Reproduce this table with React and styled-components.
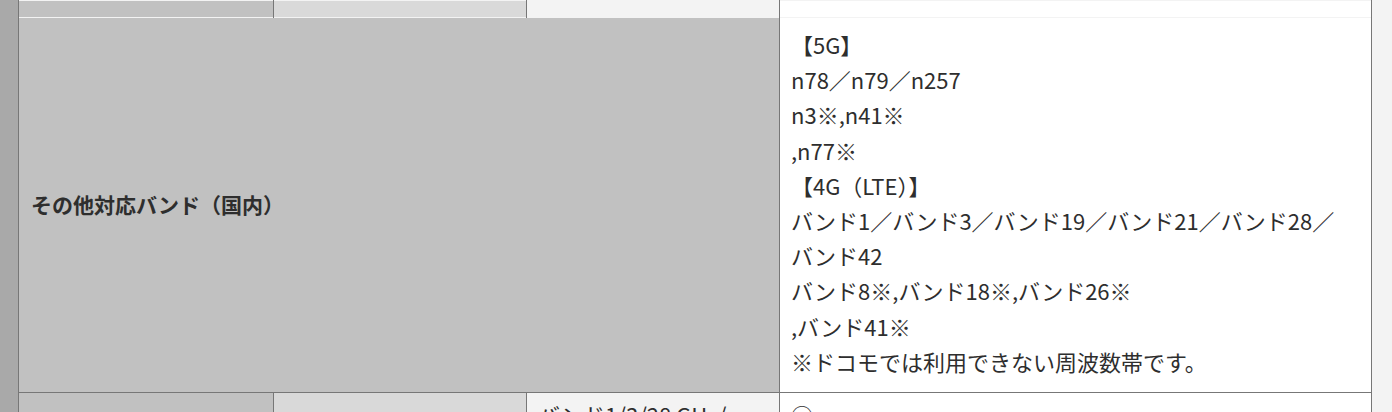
import styled, { createGlobalStyle } from "styled-components";

const GlobalStyle = createGlobalStyle`
  html, body {
    margin: 0;
    padding: 0;
    overflow: hidden;
    background: #f3f3f3;
  }
  body {
    font-family: "Noto Sans CJK JP", "Noto Sans", sans-serif;
    color: #333;
  }
`;

const Page = styled.div`
  display: flex;
  align-items: flex-start;
  width: 1392px;
`;

const Gutter = styled.div`
  width: 18px;
  flex: none;
  align-self: stretch;
  min-height: 412px;
  background: #a9a9a9;
`;

const Table = styled.table`
  border-collapse: collapse;
  table-layout: fixed;
  width: 1353px;
  flex: none;
  font-size: 22px;
  line-height: 1.6;
`;

const Cell = styled.td`
  padding: ${(p) => (p.$short ? "0 10px" : "4px 11px 10px")};
  height: ${(p) => (p.$short ? "16px" : "auto")};
  background: ${(p) => p.$bg || "#fff"};
  border-left: 1px solid ${(p) => (p.$soft ? "#a0a0a0" : "#777")};
  border-right: 1px solid #777;
  border-bottom: 1px solid ${(p) => (p.$open ? "transparent" : "#777")};
  border-top: 1px solid ${(p) => (p.$open ? "transparent" : "#777")};
  vertical-align: top;
  overflow: hidden;
  white-space: nowrap;
  color: #2e2e2e;
`;

const Label = styled.th`
  text-align: left;
  padding: 10px 12px;
  background: #c1c1c1;
  font-weight: 700;
  font-size: 21px;
  color: #2e2e2e;
  border: 1px solid #777;
  vertical-align: middle;
`;

const Bands = styled.td`
  background: #fff;
  padding: 9px 11px 13px;
  border: 1px solid #777;
  vertical-align: top;
  color: #2e2e2e;
`;

const Line = styled.div`
  white-space: nowrap;
`;

const bandLines = [
  "【5G】",
  "n78／n79／n257",
  "n3※,n41※",
  ",n77※",
  "【4G（LTE）】",
  "バンド1／バンド3／バンド19／バンド21／バンド28／",
  "バンド42",
  "バンド8※,バンド18※,バンド26※",
  ",バンド41※",
  "※ドコモでは利用できない周波数帯です。",
];

export default function App() {
  return (
    <>
      <GlobalStyle />
      <Page>
        <Gutter />
        <Table>
          <colgroup>
            <col style={{ width: 255 }} />
            <col style={{ width: 253 }} />
            <col style={{ width: 253 }} />
            <col style={{ width: 592 }} />
          </colgroup>
          <tbody>
            <tr>
              <Cell $short $open $bg="#c1c1c1" />
              <Cell $short $open $soft $bg="#d9d9d9" />
              <Cell $short $open $soft $bg="#f3f3f3" />
              <Cell $short $open />
            </tr>
            <tr>
              <Label colSpan={3}>その他対応バンド（国内）</Label>
              <Bands>
                {bandLines.map((t, i) => (
                  <Line key={i}>{t}</Line>
                ))}
              </Bands>
            </tr>
            <tr>
              <Cell $bg="#c1c1c1">&nbsp;</Cell>
              <Cell $soft $bg="#d9d9d9">&nbsp;</Cell>
              <Cell $soft $bg="#f3f3f3">バンド1/3/28 GHz/</Cell>
              <Cell>○</Cell>
            </tr>
          </tbody>
        </Table>
      </Page>
    </>
  );
}
